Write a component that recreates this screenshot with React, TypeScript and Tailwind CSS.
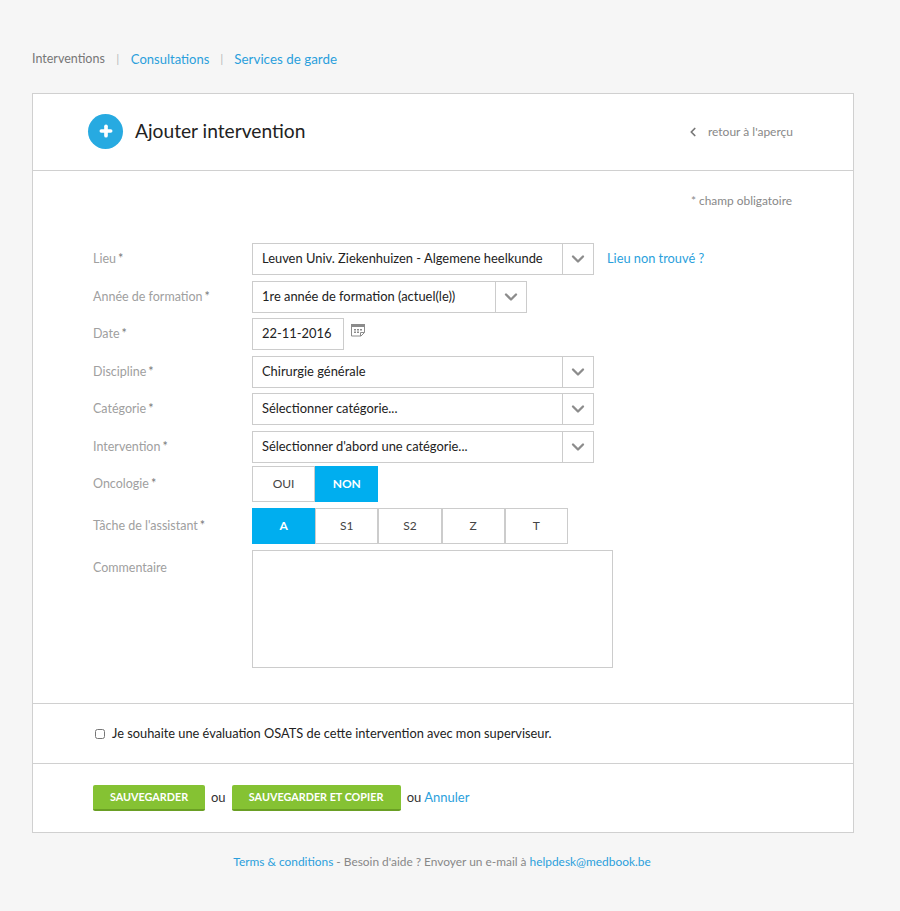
import { ChevronDown, ChevronLeft, Plus } from "lucide-react";

function Label({ text, required = true, offset = "" }: { text: string; required?: boolean; offset?: string }) {
  return (
    <div className={`w-[159px] shrink-0 pl-[60px] box-content text-[12.5px] leading-[32px] text-[#a0a0a0] whitespace-nowrap ${offset}`}>
      {text}
      {required && <span className="ml-[2px] text-[#777]">*</span>}
    </div>
  );
}

function Select({ value, width }: { value: string; width: string }) {
  return (
    <div className={`flex h-[32px] border border-[#ccc] bg-white ${width}`}>
      <div className="flex-1 pl-[9px] text-[12.9px] leading-[28px] text-[#222] whitespace-nowrap">{value}</div>
      <div className="flex w-[31px] items-center justify-center border-l border-[#ccc]">
        <ChevronDown size={20} strokeWidth={2.8} className="text-[#8c8c8c]" />
      </div>
    </div>
  );
}

function Toggle({ options, active }: { options: string[]; active: string }) {
  return (
    <div className="flex">
      {options.map((option) => (
        <div
          key={option}
          className={`flex h-[36px] w-[63.2px] items-center justify-center border text-[12px] ${
            option === active
              ? "border-[#00aeef] bg-[#00aeef] font-bold text-white"
              : "border-[#ccc] bg-white text-[#444]"
          }`}
        >
          {option}
        </div>
      ))}
    </div>
  );
}

export default function App() {
  return (
    <div className="min-h-[911px] bg-[#f6f6f6] px-[32px] pt-[51px] font-['Lato',sans-serif]">
      <nav className="flex h-[16px] items-center text-[13px] leading-[16px] text-[#777]">
        <span className="text-[12.5px]">Interventions</span>
        <span className="mx-[11.5px] text-[12px] text-[#bbb]">|</span>
        <a className="text-[#2b9fdc]">Consultations</a>
        <span className="mx-[11px] text-[12px] text-[#bbb]">|</span>
        <a className="text-[13.4px] text-[#2b9fdc]">Services de garde</a>
      </nav>

      <div className="mt-[26px] w-[822px] border border-[#d0d0d0] bg-white">
        <header className="flex h-[77px] items-center justify-between border-b border-[#d0d0d0] pb-[2px] pl-[55px] pr-[60px]">
          <div className="flex items-center gap-[12px]">
            <div className="flex h-[35px] w-[35px] items-center justify-center rounded-full bg-[#27aae1]">
              <Plus size={16} strokeWidth={5.5} className="text-white" />
            </div>
            <h1 className="text-[19.2px] text-[#222]">Ajouter intervention</h1>
          </div>
          <a className="flex items-center gap-[8px] pt-[2px] text-[12px] text-[#888]">
            <ChevronLeft size={14} strokeWidth={3} className="text-[#777]" />
            retour à l'aperçu
          </a>
        </header>

        <section className="h-[533px] border-b border-[#d0d0d0] pt-[21px]">
          <p className="pr-[61px] text-right text-[11.9px] leading-[18px] text-[#888]">* champ obligatoire</p>

          <div className="mt-[33px] flex flex-col">
            <div className="flex items-start">
              <Label text="Lieu" />
              <Select value="Leuven Univ. Ziekenhuizen - Algemene heelkunde" width="w-[342px]" />
              <a className="ml-[13px] text-[12.8px] leading-[30px] text-[#2b9fdc]">Lieu non trouvé ?</a>
            </div>
            <div className="mt-[5.5px] flex items-start">
              <Label text="Année de formation" />
              <Select value="1re année de formation (actuel(le))" width="w-[275px]" />
            </div>
            <div className="mt-[5.5px] flex items-start">
              <Label text="Date" />
              <div className="h-[32px] w-[92px] border border-[#ccc] pl-[9px] text-[12.9px] leading-[29px] text-[#222]">
                22-11-2016
              </div>
              <svg className="ml-[7px] mt-[6px]" width="14" height="13" viewBox="0 0 14 13" fill="none">
                <path d="M.5 .5h13v8l-3.5 3.5H.5z" stroke="#8c8c8c" />
                <path d="M0 0h14v3H0z" fill="#8c8c8c" />
                <path d="M3 5h2v1.5H3zM6 5h2v1.5H6zM9 5h2v1.5H9zM3 7.5h2V9H3zM6 7.5h2V9H6z" fill="#8c8c8c" />
                <path d="M9.5 12V8.5H13.5" stroke="#8c8c8c" />
              </svg>
            </div>
            <div className="mt-[5.5px] flex items-start">
              <Label text="Discipline" />
              <Select value="Chirurgie générale" width="w-[342px]" />
            </div>
            <div className="mt-[5.5px] flex items-start">
              <Label text="Catégorie" />
              <Select value="Sélectionner catégorie..." width="w-[342px]" />
            </div>
            <div className="mt-[5.5px] flex items-start">
              <Label text="Intervention" />
              <Select value="Sélectionner d'abord une catégorie..." width="w-[342px]" />
            </div>
            <div className="mt-[3.5px] flex items-start">
              <Label text="Oncologie" offset="pt-[2px]" />
              <Toggle options={["OUI", "NON"]} active="NON" />
            </div>
            <div className="mt-[6px] flex items-start">
              <Label text="Tâche de l'assistant" offset="pt-[2px]" />
              <Toggle options={["A", "S1", "S2", "Z", "T"]} active="A" />
            </div>
            <div className="mt-[6px] flex items-start">
              <Label text="Commentaire" required={false} offset="pt-[2px]" />
              <div className="h-[118px] w-[361px] border border-[#ccc]" />
            </div>
          </div>
        </section>

        <section className="flex h-[60px] items-center gap-[7px] border-b border-[#d0d0d0] pl-[62px] text-[12.8px] text-[#222]">
          <input type="checkbox" className="h-[10px] w-[10px]" readOnly />
          <span>Je souhaite une évaluation OSATS de cette intervention avec mon superviseur.</span>
        </section>

        <footer className="flex h-[68px] items-center pl-[60px] text-[13px] text-[#333]">
          <button className="h-[26px] w-[112px] rounded-[2px] border-b-2 border-[#6a9f24] bg-[#85c233] text-[10.8px] font-bold text-white">
            SAUVEGARDER
          </button>
          <span className="ml-[6px] mr-[6px]">ou</span>
          <button className="h-[26px] w-[169px] rounded-[2px] border-b-2 border-[#6a9f24] bg-[#85c233] text-[10.8px] font-bold text-white">
            SAUVEGARDER ET COPIER
          </button>
          <span className="ml-[6px]">ou</span>
          <a className="ml-[3px] text-[#2b9fdc]">Annuler</a>
        </footer>
      </div>

      <p className="mt-[20px] w-[820px] text-center text-[11.9px] text-[#888]">
        <a className="text-[#2b9fdc]">Terms &amp; conditions</a> - Besoin d'aide ? Envoyer un e-mail à{" "}
        <a className="text-[#2b9fdc]">helpdesk@medbook.be</a>
      </p>
    </div>
  );
}
